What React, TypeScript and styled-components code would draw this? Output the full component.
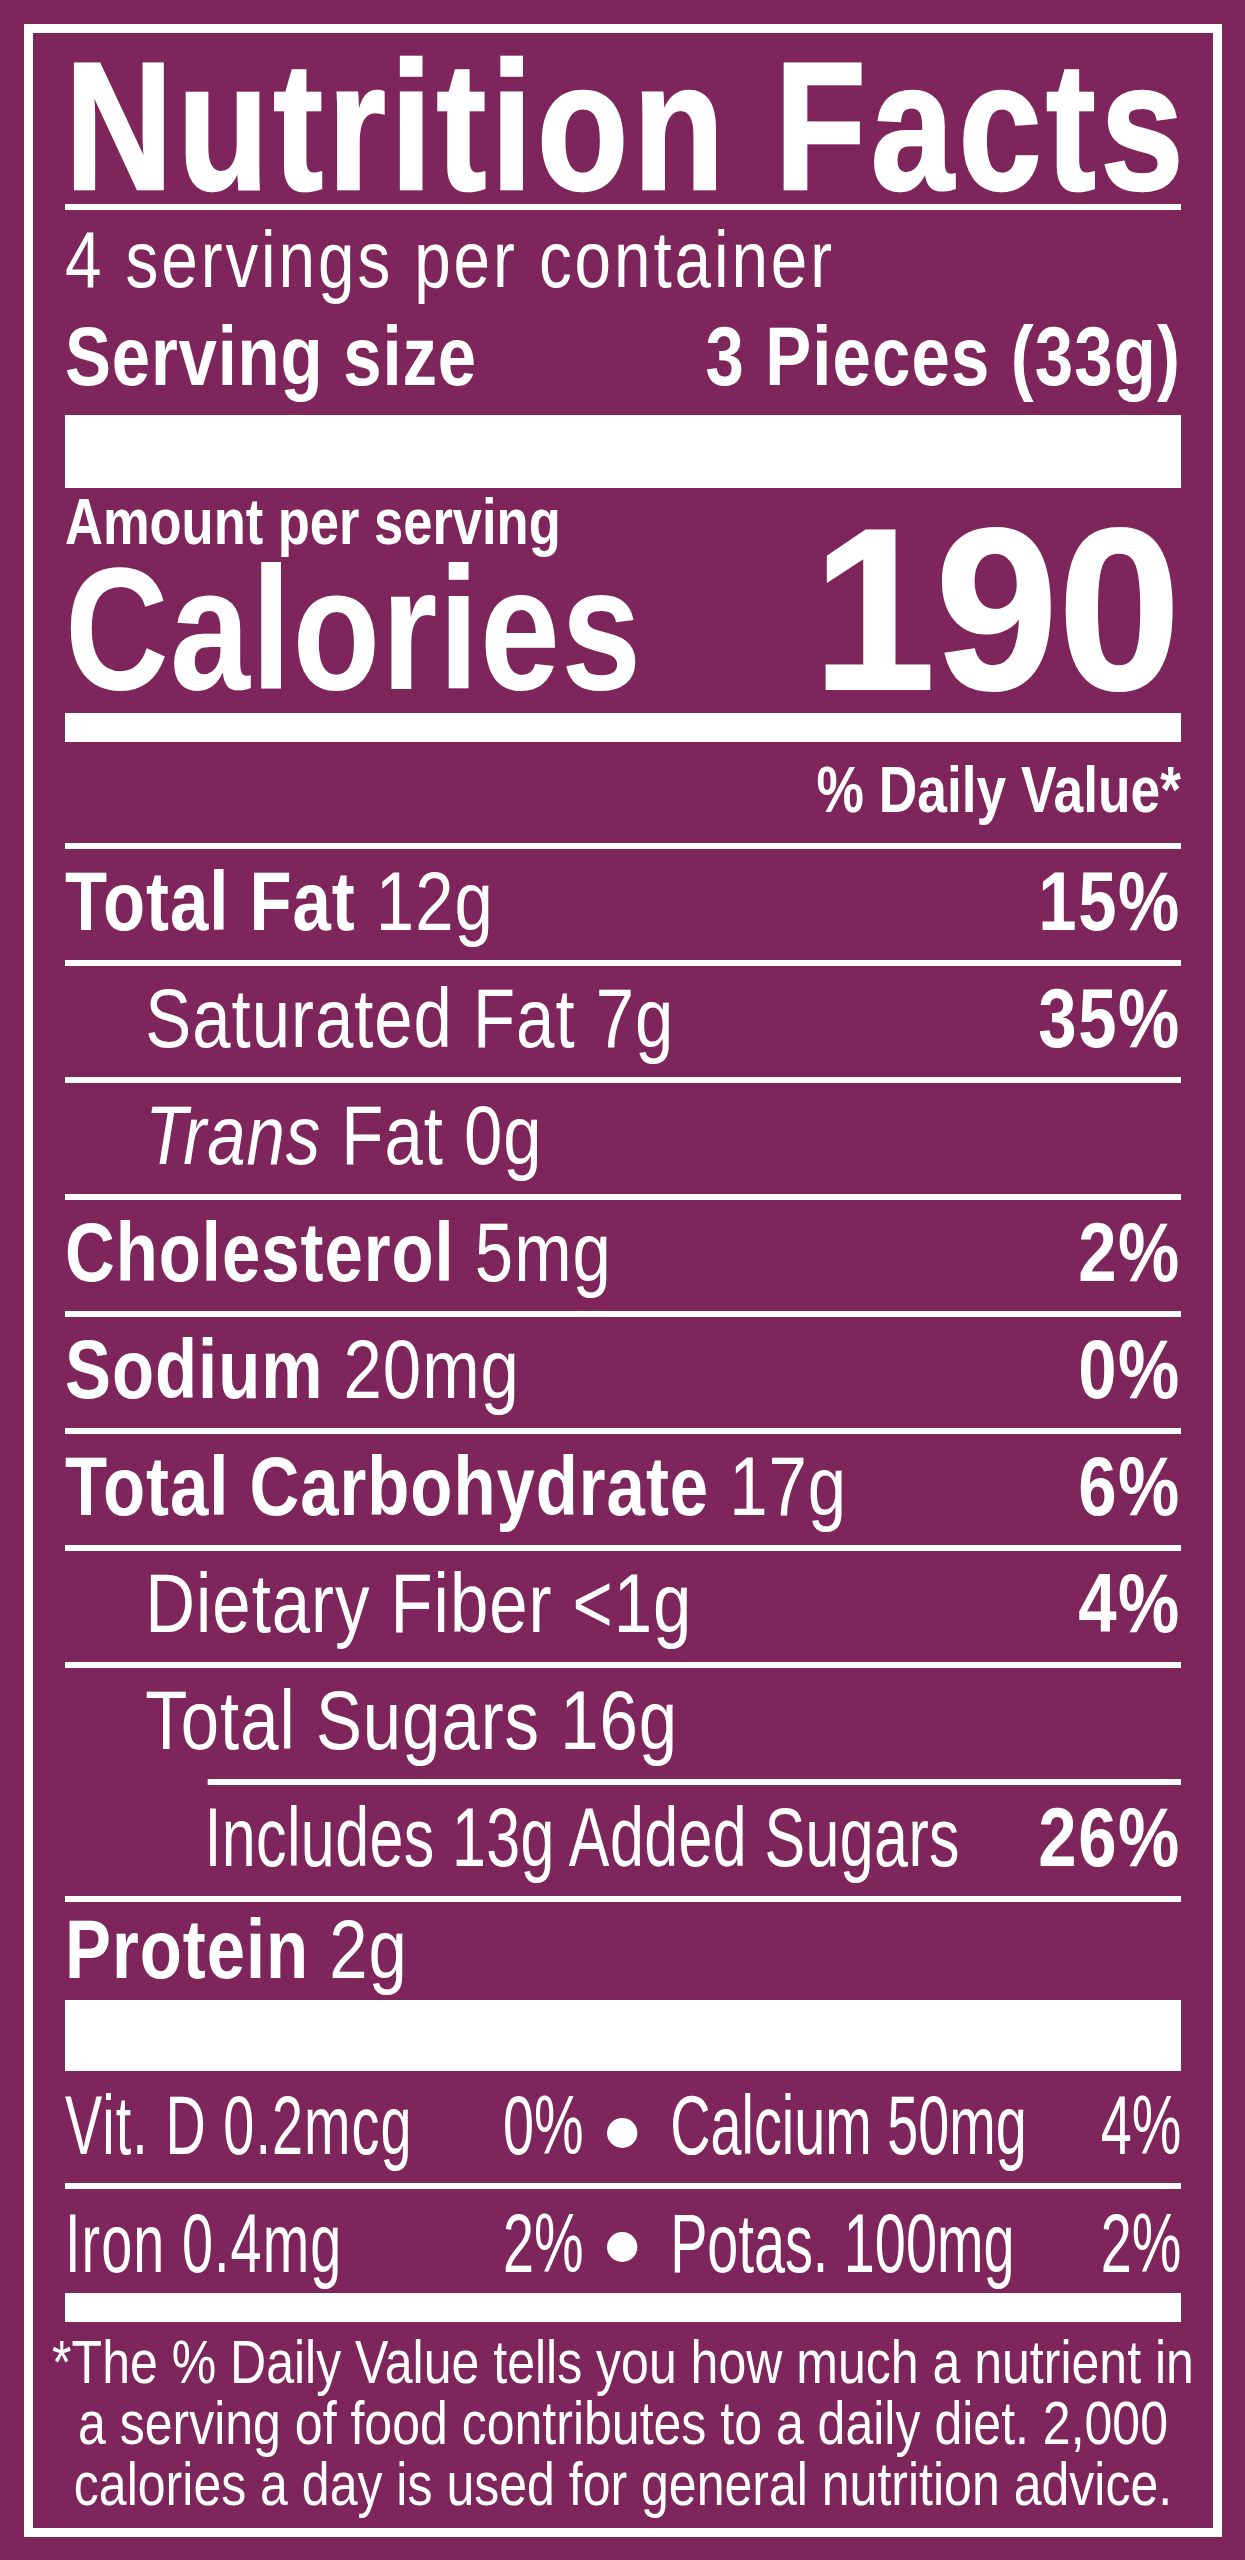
import React from 'react'
import styled, { createGlobalStyle } from 'styled-components'

const purple = '#7e265c'
const condense = 0.82
const contentWidth = 1116

const GlobalStyle = createGlobalStyle`
  html, body { margin: 0; padding: 0; background: ${purple}; }
  body { font-family: "Liberation Sans", Arial, sans-serif; color: #fff; }
`

const Page = styled.div`
  box-sizing: border-box;
  width: 1245px;
  height: 2560px;
  padding: 24px 23px 23px 24px;
  background: ${purple};
`

const Label = styled.section`
  box-sizing: border-box;
  height: 100%;
  border: 9px solid #fff;
  padding: 0 32px;
  overflow: hidden;
`

// the label face is a condensed grotesque: lay out wide, then squeeze the whole column
const Condensed = styled.div`
  width: ${contentWidth / condense}px;
  height: 100%;
  display: flex;
  flex-direction: column;
  transform: scaleX(${condense});
  transform-origin: left top;
`

// a text band: fixed height, baseline placed $base px below its top
const Band = styled.div<{ $h: number; $base: number; $size: number; $indent?: number; $track?: number }>`
  flex-shrink: 0;
  display: flex;
  justify-content: space-between;
  height: ${p => p.$h}px;
  font-size: ${p => p.$size}px;
  line-height: ${p => 2 * (p.$base - 0.3465 * p.$size)}px;
  padding-left: ${p => p.$indent ?? 0}px;
  letter-spacing: ${p => p.$track ?? 0}px;
  white-space: nowrap;
`

const Rule = styled.div<{ $h: number; $inset?: number }>`
  flex-shrink: 0;
  height: ${p => p.$h}px;
  margin-left: ${p => p.$inset ?? 0}px;
  background: #fff;
`

const Title = styled.h1`
  margin: 0;
  font-size: inherit;
  font-weight: 700;
  letter-spacing: 5.7px;
  -webkit-text-stroke: 2.5px #fff;
`

const B = styled.b<{ $track?: number }>`
  font-weight: 700;
  ${p => (p.$track !== undefined ? `letter-spacing: ${p.$track}px;` : '')}
`

const I = styled.i`
  font-style: italic;
`

const Squeeze = styled.span<{ $x: number; $origin?: 'left' | 'right'; $track?: number }>`
  display: inline-block;
  min-width: 0;
  flex-shrink: ${p => (p.$origin === 'right' ? 0 : 1)};
  letter-spacing: ${p => p.$track ?? 0}px;
  transform: scaleX(${p => p.$x});
  transform-origin: ${p => p.$origin ?? 'left'} center;
`

// the calorie figure is set larger than the word, sharing its baseline (130px into the band)
const BigNumber = styled(Squeeze)`
  font-size: 230px;
  line-height: ${2 * (130 - 0.3465 * 230)}px;
  font-weight: 700;
  letter-spacing: 0;
  -webkit-text-stroke: 2px #fff;
`

const Half = styled.div<{ $w?: number }>`
  display: flex;
  justify-content: space-between;
  ${p => (p.$w ? `width: ${p.$w}px; flex-shrink: 0;` : 'flex: 1; min-width: 0; margin-left: 40px;')}
`

const Dot = styled.span`
  flex-shrink: 0;
  align-self: center;
  width: 37px;
  height: 30px;
  margin: 12px 0 0 29px;
  border-radius: 50%;
  background: #fff;
`

const Footnote = styled.div`
  flex-shrink: 0;
  padding-top: 10px;
  font-size: 61px;
  line-height: 61px;
  text-align: center;
  white-space: nowrap;
`

const FootLine = styled.div`
  margin: 0 -40px;
`

type Row = {
  name: string
  amount: string
  pct?: string
  level: 0 | 1
  italic?: boolean
  rule?: number
}

const rows: Row[] = [
  { name: 'Total Fat', amount: '12g', pct: '15%', level: 0 },
  { name: 'Saturated Fat', amount: '7g', pct: '35%', level: 1 },
  { name: 'Trans', amount: 'Fat 0g', level: 1, italic: true },
  { name: 'Cholesterol', amount: '5mg', pct: '2%', level: 0 },
  { name: 'Sodium', amount: '20mg', pct: '0%', level: 0 },
  { name: 'Total Carbohydrate', amount: '17g', pct: '6%', level: 0 },
  { name: 'Dietary Fiber', amount: '<1g', pct: '4%', level: 1 },
  { name: 'Total Sugars', amount: '16g', level: 1, rule: 174 },
]

const NutrientName = ({ r }: { r: Row }) => {
  if (r.level === 0) return <span><B>{r.name}</B> {r.amount}</span>
  if (r.italic) return <span><I>{r.name}</I> {r.amount}</span>
  return <span>{r.name} {r.amount}</span>
}

const Mineral = ({ left, leftPct, right, rightPct, h }: { left: string; leftPct: string; right: string; rightPct: string; h: number }) => (
  <Band $h={h} $base={84} $size={84}>
    <Half $w={632}>
      <Squeeze $x={0.81} $track={1.6}>{left}</Squeeze>
      <Squeeze $x={0.81} $origin="right">{leftPct}</Squeeze>
    </Half>
    <Dot />
    <Half>
      <Squeeze $x={0.81}>{right}</Squeeze>
      <Squeeze $x={0.81} $origin="right">{rightPct}</Squeeze>
    </Half>
  </Band>
)

const App = () => (
  <Page>
    <GlobalStyle />
    <Label>
      <Condensed>
        <Band $h={171} $base={157} $size={182}>
          <Title>Nutrition Facts</Title>
        </Band>
        <Rule $h={6} />
        <Band $h={100} $base={78} $size={80} $track={3.55}>
          <span>4 servings per container</span>
        </Band>
        <Band $h={105} $base={76} $size={84}>
          <B $track={1}>Serving size</B>
          <B $track={1.4}>3 Pieces (33g)</B>
        </Band>
        <Rule $h={73} />
        <Band $h={72} $base={57} $size={64}>
          <B>Amount per serving</B>
        </Band>
        <Band $h={153} $base={130} $size={175}>
          <B $track={1.7}>Calories</B>
          <BigNumber $x={1.17} $origin="right">190</BigNumber>
        </Band>
        <Rule $h={29} />
        <Band $h={101} $base={71} $size={65}>
          <span />
          <B>% Daily Value*</B>
        </Band>
        <Rule $h={6} />

        {rows.map(r => (
          <React.Fragment key={r.name}>
            <Band $h={111} $base={82} $size={84} $indent={r.level ? 98 : 0} $track={1.2}>
              <NutrientName r={r} />
              {r.pct && <B $track={2}>{r.pct}</B>}
            </Band>
            <Rule $h={6} $inset={r.rule} />
          </React.Fragment>
        ))}

        <Band $h={111} $base={82} $size={84} $indent={170}>
          <Squeeze $x={0.885} $track={0.55}>Includes 13g Added Sugars</Squeeze>
          <B $track={2}>26%</B>
        </Band>
        <Rule $h={6} />
        <Band $h={98} $base={77} $size={84} $track={1.2}>
          <span><B>Protein</B> 2g</span>
        </Band>
        <Rule $h={71} />

        <Mineral h={112} left="Vit. D 0.2mcg" leftPct="0%" right="Calcium 50mg" rightPct="4%" />
        <Rule $h={6} />
        <Mineral h={104} left="Iron 0.4mg" leftPct="2%" right="Potas. 100mg" rightPct="2%" />
        <Rule $h={29} />

        <Footnote>
          <FootLine>*The % Daily Value tells you how much a nutrient in</FootLine>
          <FootLine>a serving of food contributes to a daily diet. 2,000</FootLine>
          <FootLine>calories a day is used for general nutrition advice.</FootLine>
        </Footnote>
      </Condensed>
    </Label>
  </Page>
)

export default App
